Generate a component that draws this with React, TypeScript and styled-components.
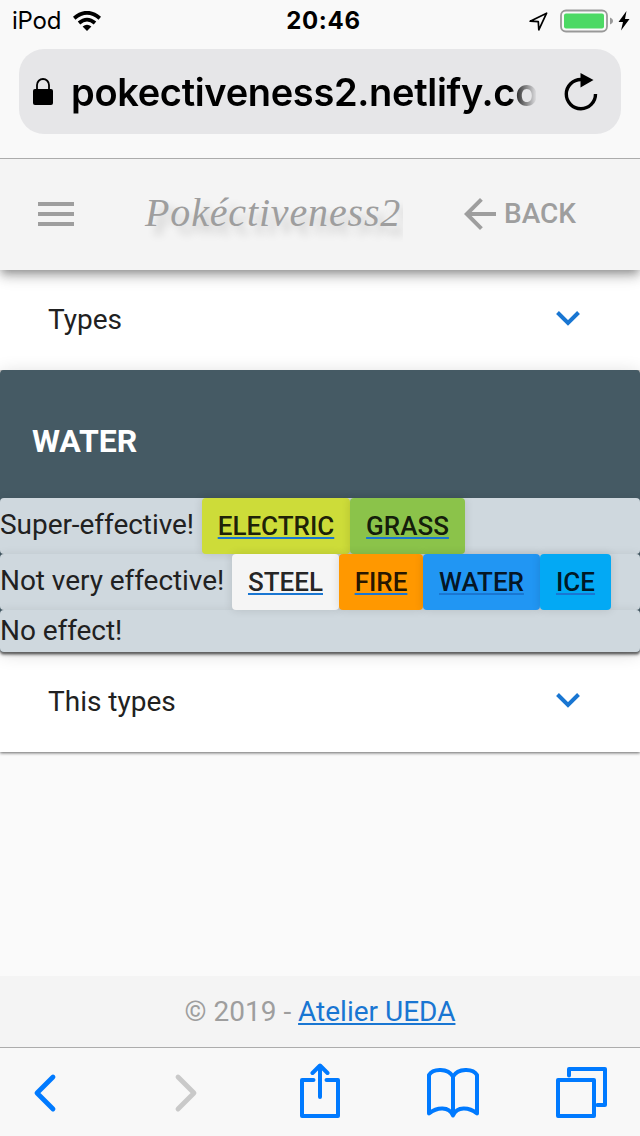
import React from 'react';
import styled, { createGlobalStyle } from 'styled-components';

const GlobalStyle = createGlobalStyle`
  * { box-sizing: border-box; }
  body { margin: 0; background: #fafafa; }
`;

const Screen = styled.div`
  width: 640px;
  height: 1136px;
  display: flex;
  flex-direction: column;
  overflow: hidden;
  background: #fafafa;
  color: #212121;
  font-family: Roboto, sans-serif;
  font-size: 28px;
  line-height: 42px;
`;

const BrowserTop = styled.div`
  height: 159px;
  flex: none;
  position: relative;
  z-index: 3;
  background: #f9f9f9;
  border-bottom: 1px solid #acacac;
  font-family: Inter, sans-serif;
  color: #000;
`;

const StatusBar = styled.div`
  height: 49px;
  padding: 0 8px 8px 12px;
  display: grid;
  grid-template-columns: 1fr auto 1fr;
  align-items: center;
  font-size: 24px;
  line-height: 40px;
`;

const Carrier = styled.div`
  display: flex;
  align-items: center;
  gap: 12px;
  letter-spacing: -0.2px;
`;

const Clock = styled.div`
  font-weight: 700;
  letter-spacing: 0.7px;
  padding-left: 3px;
`;

const StatusIcons = styled.div`
  display: flex;
  justify-content: flex-end;
`;

const AddressBar = styled.div`
  margin: 0 19px;
  width: 602px;
  height: 85px;
  border-radius: 25px;
  background: #e6e6e8;
  display: flex;
  align-items: center;
  padding: 0 23px 0 14px;
`;

const Url = styled.div`
  width: 465px;
  margin: 0 28px 0 17px;
  white-space: nowrap;
  font-size: 38px;
  font-weight: 600;
  line-height: 56px;
  letter-spacing: -0.32px;
  mask-image: linear-gradient(to right, #000 440px, transparent 466px);
`;

const AppBar = styled.header`
  height: 111px;
  flex: none;
  position: relative;
  z-index: 2;
  display: flex;
  align-items: center;
  padding: 0 64px 2px 38px;
  background: #f4f4f4;
  color: #9e9e9e;
  box-shadow: 0 4px 8px -2px rgba(0, 0, 0, 0.3), 0 8px 10px rgba(0, 0, 0, 0.14), 0 2px 20px rgba(0, 0, 0, 0.12);
`;

const Logo = styled.div`
  width: 259px;
  height: 62px;
  margin: 0 61px 0 70px;
  padding-left: 1px;
  overflow: hidden;
  white-space: nowrap;
  font-family: 'Liberation Serif', serif;
  font-style: italic;
  font-size: 40px;
  line-height: 60px;
  letter-spacing: 0.85px;
  text-shadow: 8px 8px 8px rgba(0, 0, 0, 0.18);
`;

const Back = styled.div`
  display: flex;
  align-items: center;
  gap: 8px;
  font-size: 28px;
  font-weight: 500;
`;

const Panel = styled.section`
  height: 100px;
  flex: none;
  display: flex;
  align-items: center;
  justify-content: space-between;
  padding: 0 60px 0 48px;
  background: #fff;
  box-shadow: 0 1px 3px rgba(0, 0, 0, 0.6);

  svg {
    margin-bottom: 4px;
  }
`;

const Card = styled.section`
  flex: none;
  position: relative;
  z-index: 1;
  border-radius: 4px;
  background: #455a64;
  box-shadow: 0 2px 2px rgba(0, 0, 0, 0.35), 0 3px 3px rgba(0, 0, 0, 0.35), 0 2px 18px rgba(0, 0, 0, 0.14);
`;

const CardTitle = styled.h2`
  margin: 0;
  height: 128px;
  display: flex;
  align-items: center;
  padding: 14px 32px 0;
  color: #fff;
  font-size: 32px;
  font-weight: 700;
`;

const Row = styled.div<{ $height: number }>`
  height: ${(p) => p.$height}px;
  display: flex;
  align-items: center;
  border-radius: 4px;
  background: #cfd8de;
  box-shadow: 0 0 10px rgba(0, 0, 0, 0.08);
`;

const RowLabel = styled.span<{ $width?: number; $raise?: number }>`
  width: ${(p) => (p.$width ? p.$width + 'px' : 'auto')};
  flex: none;
  padding-bottom: ${(p) => p.$raise ?? 0}px;
  white-space: nowrap;
  letter-spacing: -0.05px;
`;

const Chip = styled.a<{ $bg: string; $width: number }>`
  width: ${(p) => p.$width}px;
  height: 56px;
  flex: none;
  display: flex;
  align-items: center;
  justify-content: center;
  border-radius: 4px;
  background: ${(p) => p.$bg};
  color: rgba(0, 0, 0, 0.87);
  font-size: 26px;
  font-weight: 500;
  text-decoration: underline;
  text-decoration-color: #1976d2;
  text-decoration-thickness: 2px;
  text-underline-offset: 2px;
  box-shadow: 0 0 10px rgba(0, 0, 0, 0.12);
`;

const Spacer = styled.div`
  flex: 1;
`;

const Footer = styled.footer`
  height: 71px;
  flex: none;
  display: flex;
  align-items: center;
  justify-content: center;
  background: #f4f4f4;
  color: #9e9e9e;
  white-space: pre;
`;

const FooterLink = styled.a`
  color: #1976d2;
  text-decoration: underline;
  text-decoration-thickness: 2px;
  text-underline-offset: 2px;
`;

const Toolbar = styled.nav`
  height: 89px;
  flex: none;
  display: flex;
  align-items: center;
  justify-content: space-between;
  padding: 0 32px 2px;
  border-top: 1px solid #acacac;
  background: #f8f8f8;
`;

const Chevron = () => (
  <svg width="24" height="16" viewBox="0 0 24 16">
    <path d="M1.500 2.500 12 13 22.500 2.500" fill="none" stroke="#1976d2" strokeWidth="4" />
  </svg>
);

const Wifi = () => (
  <svg width="28" height="20" viewBox="0 0 28 20">
    <g fill="none" stroke="#000" strokeWidth="3.8">
      <path d="M1.2 7.2Q14 -3.6 26.8 7.2" />
      <path d="M6 12Q14 5.2 22 12" />
    </g>
    <path d="M9.6 15.6Q14 12 18.4 15.6L14 20Z" />
  </svg>
);

const StatusGlyphs = () => (
  <svg width="104" height="24" viewBox="0 0 104 24">
    <path d="M2.2 12.2 18.6 4.2 10.8 20.8 10.3 12.7Z" fill="none" stroke="#000" strokeWidth="1.7" strokeLinejoin="round" />
    <rect x="33" y="1.500" width="46" height="21" rx="5" fill="none" stroke="#999" strokeWidth="1.800" />
    <rect x="36" y="4.500" width="40" height="15" rx="2" fill="#4cd964" />
    <path d="M82 8.500C86 10 86 14 82 15.500Z" fill="#999" />
    <path d="M98.500 2 90.500 13h4.500l-2 8.500 8.500-11.500h-4.500Z" fill="#000" />
  </svg>
);

const Lock = () => (
  <svg width="21" height="28" viewBox="0 0 21 28">
    <rect x="0" y="11" width="20" height="16" rx="2" />
    <path d="M4 12V7a6 6 0 0 1 12 0V12" fill="none" stroke="#000" strokeWidth="1.800" />
  </svg>
);

const Reload = () => (
  <svg width="34" height="40" viewBox="0 0 34 40">
    <path d="M31.500 22A14.600 14.600 0 1 1 17 7.500" fill="none" stroke="#000" strokeWidth="3.400" />
    <path d="M16.500 1 29.500 8 16.500 15.500Z" />
  </svg>
);

const Hamburger = () => (
  <svg width="36" height="24" viewBox="0 0 36 24" fill="#9e9e9e">
    <path d="M0 0h36v4H0zM0 10h36v4H0zM0 20h36v4H0z" />
  </svg>
);

const ArrowLeft = () => (
  <svg width="32" height="32" viewBox="0 0 24 24" fill="#9e9e9e">
    <path d="M24 10.500H5.740l8.380-8.380L12 0 0 12l12 12 2.120-2.120L5.740 13.500H24z" />
  </svg>
);

const ToolbarGlyphs = () => (
  <svg width="576" height="56" viewBox="32 1063 576 56" fill="none" stroke="#007aff" strokeWidth="4" strokeLinecap="round" strokeLinejoin="round">
    <path d="M53 1077 37 1093 53 1109" strokeWidth="4.800" />
    <path d="M178 1077 194 1093 178 1109" stroke="#c9c9c9" strokeWidth="4.800" />
    <path d="M313.500 1080H302v36h36v-36h-11.500M320 1097V1066M312.500 1073l7.500-7.500 7.500 7.500" />
    <path d="M453 1076.500C448 1068 433 1068 429 1075V1113.500C437 1107 449 1106 453 1115.500ZC458 1068 473 1068 477 1075V1113.500C469 1107 457 1106 453 1115.500" />
    <path d="M558 1080h36v36h-36zM569 1075.500v-6.500h36v36h-7.500" />
  </svg>
);

type TypeChip = { name: string; bg: string; width: number };

const superEffective: TypeChip[] = [
  { name: 'ELECTRIC', bg: '#cddc39', width: 148 },
  { name: 'GRASS', bg: '#8bc34a', width: 115 },
];

const notVeryEffective: TypeChip[] = [
  { name: 'STEEL', bg: '#f5f5f5', width: 107 },
  { name: 'FIRE', bg: '#ff9800', width: 84 },
  { name: 'WATER', bg: '#2196f3', width: 117 },
  { name: 'ICE', bg: '#03a9f4', width: 71 },
];

const Chips = ({ items }: { items: TypeChip[] }) => (
  <>
    {items.map((t) => (
      <Chip key={t.name} $bg={t.bg} $width={t.width}>
        {t.name}
      </Chip>
    ))}
  </>
);

export default function App() {
  return (
    <Screen>
      <GlobalStyle />
      <BrowserTop>
        <StatusBar>
          <Carrier>
            iPod
            <Wifi />
          </Carrier>
          <Clock>20:46</Clock>
          <StatusIcons>
            <StatusGlyphs />
          </StatusIcons>
        </StatusBar>
        <AddressBar>
          <Lock />
          <Url>pokectiveness2.netlify.co</Url>
          <Reload />
        </AddressBar>
      </BrowserTop>
      <AppBar>
        <Hamburger />
        <Logo>Pokéctiveness2</Logo>
        <Back>
          <ArrowLeft />
          BACK
        </Back>
      </AppBar>
      <Panel>
        Types
        <Chevron />
      </Panel>
      <Card>
        <CardTitle>WATER</CardTitle>
        <Row $height={56}>
          <RowLabel $width={202} $raise={2}>Super-effective!</RowLabel>
          <Chips items={superEffective} />
        </Row>
        <Row $height={56}>
          <RowLabel $width={232} $raise={2}>Not very effective!</RowLabel>
          <Chips items={notVeryEffective} />
        </Row>
        <Row $height={42}>
          <RowLabel>No effect!</RowLabel>
        </Row>
      </Card>
      <Panel>
        This types
        <Chevron />
      </Panel>
      <Spacer />
      <Footer>
        {'© 2019 - '}
        <FooterLink>Atelier UEDA</FooterLink>
      </Footer>
      <Toolbar>
        <ToolbarGlyphs />
      </Toolbar>
    </Screen>
  );
}
